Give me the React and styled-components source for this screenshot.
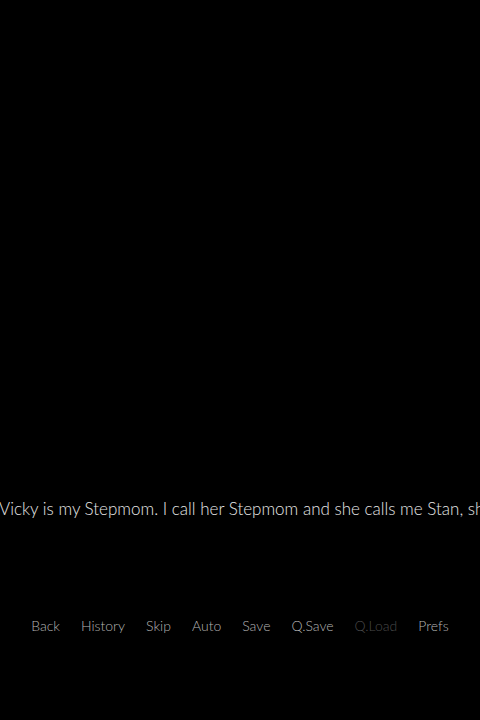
import styled, { createGlobalStyle } from "styled-components";

const GlobalStyle = createGlobalStyle`
  html, body {
    margin: 0;
    padding: 0;
    background: #000;
  }
  body {
    font-family: Lato, "DejaVu Sans", sans-serif;
  }
`;

const Screen = styled.div`
  width: 480px;
  height: 720px;
  background: #000;
  overflow: hidden;
  display: flex;
  flex-direction: column;
`;

const Dialogue = styled.p`
  margin: 498px 0 0 -1px;
  white-space: nowrap;
  font-size: 17px;
  font-weight: 300;
  line-height: 22px;
  color: #e6e6e6;
`;

const QuickMenu = styled.nav`
  margin-top: 97px;
  display: flex;
  justify-content: center;
  gap: 21px;
`;

const QuickButton = styled.span`
  font-size: 14px;
  font-weight: 300;
  line-height: 18px;
  color: ${(p) => (p.disabled ? "#4a4a4a" : "#b4b4b4")};
`;

const items = [
  { label: "Back" },
  { label: "History" },
  { label: "Skip" },
  { label: "Auto" },
  { label: "Save" },
  { label: "Q.Save" },
  { label: "Q.Load", disabled: true },
  { label: "Prefs" },
];

export default function App() {
  return (
    <Screen>
      <GlobalStyle />
      <Dialogue>
        Vicky is my Stepmom. I call her Stepmom and she calls me Stan, she
        likes it that way.
      </Dialogue>
      <QuickMenu>
        {items.map((it) => (
          <QuickButton key={it.label} disabled={it.disabled}>
            {it.label}
          </QuickButton>
        ))}
      </QuickMenu>
    </Screen>
  );
}
